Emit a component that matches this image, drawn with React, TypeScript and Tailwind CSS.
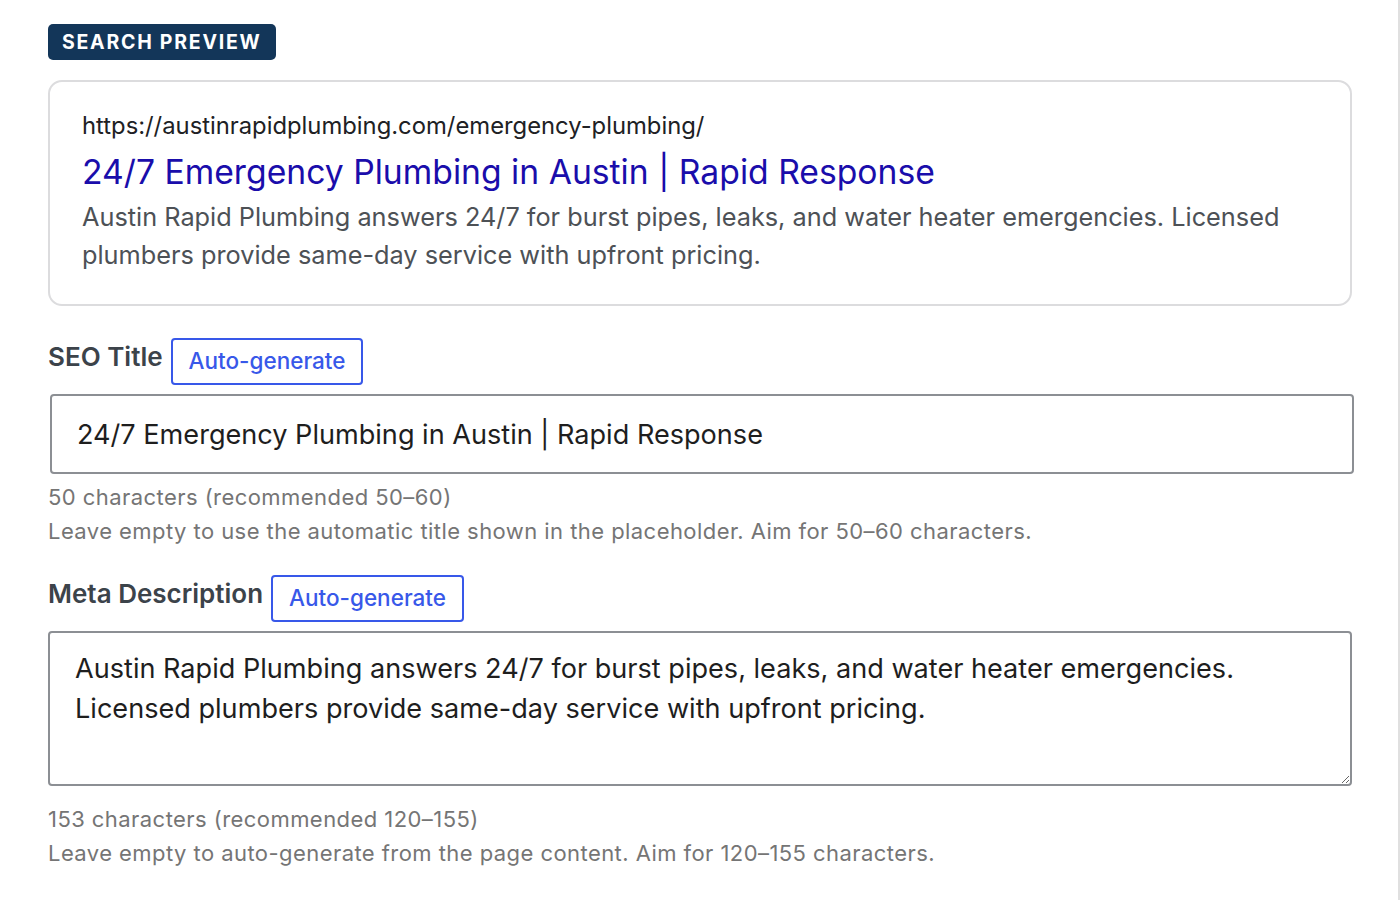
import React, { useState } from "react";

const font = { fontFamily: "Inter, 'Noto Sans', sans-serif" };

function AutoButton() {
  return (
    <button className="h-[47px] px-[16px] border-2 border-[#3858e9] rounded-[4px] text-[22.5px] text-[#3858e9] font-medium leading-none bg-white">
      Auto-generate
    </button>
  );
}

export default function App() {
  const [title, setTitle] = useState("24/7 Emergency Plumbing in Austin | Rapid Response");
  const [desc, setDesc] = useState(
    "Austin Rapid Plumbing answers 24/7 for burst pipes, leaks, and water heater emergencies. Licensed plumbers provide same-day service with upfront pricing."
  );

  return (
    <div className="min-h-screen bg-white border-r-2 border-[#e0e0e0]" style={font}>
      <div className="pl-12 pr-[46px] pt-6 pb-10">
        {/* Badge */}
        <span className="inline-block bg-[#133659] text-white text-[19.5px] font-bold tracking-[0.09em] uppercase px-[14px] h-9 leading-9 rounded-[5px]">
          Search Preview
        </span>

        {/* Preview card */}
        <div className="mt-5 border-2 border-[#dcdcde] rounded-[14px] px-8 pt-[30px] pb-[30px]">
          <div className="text-[23.8px] leading-[28px] text-[#202124]">
            https://austinrapidplumbing.com/emergency-plumbing/
          </div>
          <div className="mt-[12px] text-[33.7px] leading-[40px] text-[#1a0dab]">{title}</div>
          <p className="mt-[6px] text-[25.3px] leading-[38px] text-[#4d5156]">{desc}</p>
        </div>

        {/* SEO Title */}
        <div className="mt-8 flex items-start gap-2">
          <label className="text-[26px] font-semibold text-[#3c434a] leading-[38px]">SEO Title</label>
          <AutoButton />
        </div>
        <input
          value={title}
          onChange={(e) => setTitle(e.target.value)}
          className="mt-[9px] ml-[2px] block w-full h-[80px] border-2 border-[#8c8f94] rounded-[4px] px-[25px] text-[27.1px] text-[#1e1e1e] outline-none"
        />
        <div className="mt-[6px] text-[22px] leading-[34px] text-[#757575] tracking-[0.02em]">
          <div>50 characters (recommended 50–60)</div>
          <div>Leave empty to use the automatic title shown in the placeholder. Aim for 50–60 characters.</div>
        </div>

        {/* Meta Description */}
        <div className="mt-[27px] flex items-start gap-2">
          <label className="text-[26px] font-semibold text-[#3c434a] leading-[38px]">Meta Description</label>
          <AutoButton />
        </div>
        <textarea
          value={desc}
          onChange={(e) => setDesc(e.target.value)}
          className="mt-[9px] block w-full h-[155px] border-2 border-[#8c8f94] rounded-[4px] px-[25px] py-[16px] text-[27.1px] leading-[40px] text-[#1e1e1e] outline-none"
        />
        <div className="mt-[16px] text-[22px] leading-[34px] text-[#757575] tracking-[0.02em]">
          <div>153 characters (recommended 120–155)</div>
          <div>Leave empty to auto-generate from the page content. Aim for 120–155 characters.</div>
        </div>
      </div>
    </div>
  );
}
